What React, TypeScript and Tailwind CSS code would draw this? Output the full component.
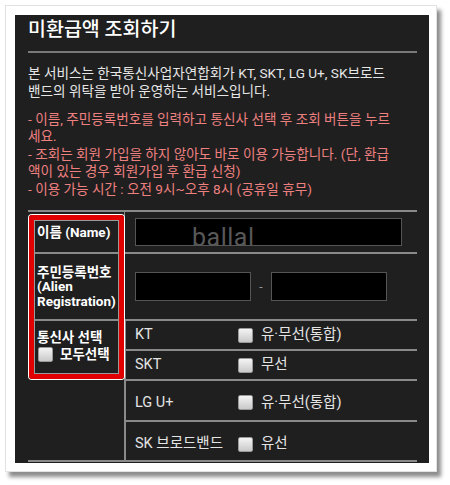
import React from "react";

const font = { fontFamily: 'Roboto, "Noto Sans CJK KR", "Noto Sans", sans-serif' };

function Box() {
  return (
    <span className="inline-block w-[15px] h-[15px] rounded-[2px] border border-[#9a9a9a] bg-gradient-to-b from-[#f4f4f4] to-[#c9c9c9]" />
  );
}

function CarrierRow({ name, opt, h, last, extra }: { name: string; opt: string; h: string; last?: boolean; extra?: string }) {
  return (
    <div className={`flex items-center ${h} ${last ? "" : "border-b-2 border-[#8a8a8a]"} ${extra ?? ""}`}>
      <div className="w-[112px] pl-[9px] text-[14.5px] text-[#e4e4e4]">{name}</div>
      <Box />
      <div className="ml-[8px] text-[14.5px] text-[#e4e4e4]">{opt}</div>
    </div>
  );
}

export default function App() {
  return (
    <div className="w-[450px] h-[485px] bg-white relative" style={font}>
      <div className="absolute left-[5px] top-[5px] w-[432px] h-[467px] bg-white border border-[#e2e2e2] shadow-[4px_5px_4px_rgba(0,0,0,0.45)] pl-[9px] pt-[9px]">
        <div className="w-[414px] h-[448px] bg-[#1f1f1f] pl-[13px] pr-[12px] flex flex-col relative">
          <div className="pt-[3px] text-[19.5px] leading-[24px] text-white font-medium">미환급액 조회하기</div>
          <div className="mt-[9px] h-[2px] bg-[#7a7a7a]" />
          <div className="mt-[12px] text-[13.6px] leading-[17.5px] text-[#e6e6e6] whitespace-nowrap">
            본 서비스는 한국통신사업자연합회가 KT, SKT, LG U+, SK브로드
            <br />
            밴드의 위탁을 받아 운영하는 서비스입니다.
          </div>
          <div className="mt-[11px] text-[13.6px] leading-[17.4px] text-[#ee8080] whitespace-nowrap">
            - 이름, 주민등록번호를 입력하고 통신사 선택 후 조회 버튼을 누르
            <br />
            세요.
            <br />
            - 조회는 회원 가입을 하지 않아도 바로 이용 가능합니다. (단, 환급
            <br />
            액이 있는 경우 회원가입 후 환급 신청)
            <br />- 이용 가능 시간 : 오전 9시~오후 8시 (공휴일 휴무)
          </div>

          <div className="mt-[12px] border-t-2 border-[#8a8a8a] relative">
            {/* row 1 */}
            <div className="flex h-[42px] border-b-2 border-[#8a8a8a]">
              <div className="w-[96px] pl-[9px] flex items-center text-[13.5px] font-bold text-white">이름 (Name)</div>
              <div className="flex-1 border-l border-[#8a8a8a] pl-[10px] flex items-center relative">
                <div className="w-[267px] h-[28px] bg-black border border-[#555]" />
                <span className="absolute left-[67px] top-[12px] text-[25px] leading-[28px] text-[#585858] tracking-[0.5px]">ballal</span>
              </div>
            </div>
            {/* row 2 */}
            <div className="flex h-[67px] border-b-2 border-[#8a8a8a]">
              <div className="w-[96px] pl-[9px] flex flex-col justify-center text-[13.5px] leading-[14.5px] font-bold text-white">
                <span>주민등록번호</span>
                <span>(Alien</span>
                <span>Registration)</span>
              </div>
              <div className="flex-1 border-l border-[#8a8a8a] pl-[10px] flex items-center">
                <div className="w-[116px] h-[29px] bg-black border border-[#555]" />
                <span className="w-[20px] text-center text-[12px] text-[#999]">-</span>
                <div className="w-[116px] h-[29px] bg-black border border-[#555]" />
              </div>
            </div>
            {/* rows 3-6 */}
            <div className="flex border-b-2 border-[#8a8a8a]">
              <div className="w-[96px] pt-[8px] text-[13.5px] leading-[16px] font-bold text-white">
                <div className="pl-[9px]">통신사 선택</div>
                <div className="mt-[1px] pl-[10px] flex items-center gap-[7px]">
                  <Box />
                  <span>모두선택</span>
                </div>
              </div>
              <div className="flex-1 border-l-2 border-[#8a8a8a]">
                <CarrierRow name="KT" opt="유·무선(통합)" h="h-[30px]" />
                <CarrierRow name="SKT" opt="무선" h="h-[30px]" />
                <CarrierRow name="LG U+" opt="유·무선(통합)" h="h-[41px]" extra="pt-[4px]" />
                <CarrierRow name="SK 브로드밴드" opt="유선" h="h-[38px]" last extra="pt-[6px]" />
              </div>
            </div>

            {/* red highlight */}
            <div className="absolute left-[1px] top-[3px] w-[95px] h-[164px] rounded-[3px] border-[5px] border-[#e00000] shadow-[0_0_0_1px_#ffffff,inset_0_0_0_1px_#9a9a9a]" />
          </div>
        </div>
      </div>
    </div>
  );
}
